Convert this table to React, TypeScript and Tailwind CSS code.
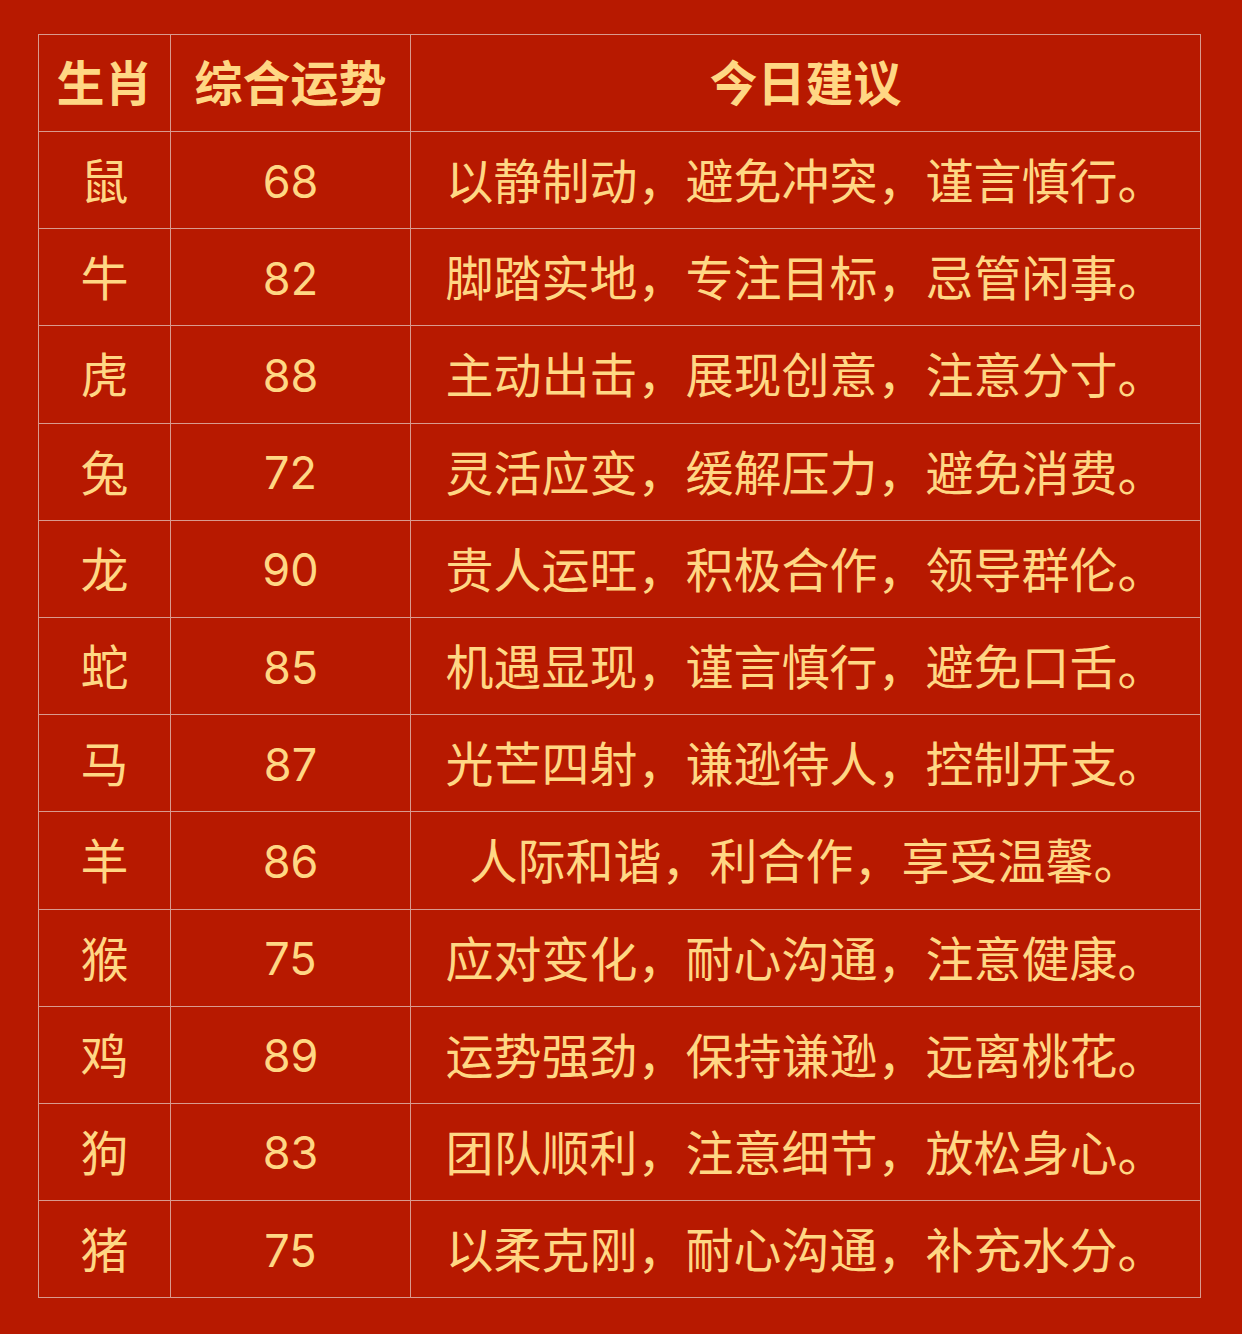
import React from "react";

interface Row {
  animal: string;
  score: number;
  advice: string;
}

const rows: Row[] = [
  { animal: "鼠", score: 68, advice: "以静制动，避免冲突，谨言慎行。" },
  { animal: "牛", score: 82, advice: "脚踏实地，专注目标，忌管闲事。" },
  { animal: "虎", score: 88, advice: "主动出击，展现创意，注意分寸。" },
  { animal: "兔", score: 72, advice: "灵活应变，缓解压力，避免消费。" },
  { animal: "龙", score: 90, advice: "贵人运旺，积极合作，领导群伦。" },
  { animal: "蛇", score: 85, advice: "机遇显现，谨言慎行，避免口舌。" },
  { animal: "马", score: 87, advice: "光芒四射，谦逊待人，控制开支。" },
  { animal: "羊", score: 86, advice: "人际和谐，利合作，享受温馨。" },
  { animal: "猴", score: 75, advice: "应对变化，耐心沟通，注意健康。" },
  { animal: "鸡", score: 89, advice: "运势强劲，保持谦逊，远离桃花。" },
  { animal: "狗", score: 83, advice: "团队顺利，注意细节，放松身心。" },
  { animal: "猪", score: 75, advice: "以柔克刚，耐心沟通，补充水分。" },
];

export default function App() {
  return (
    <div
      className="min-h-[1334px] w-[1242px] bg-[#b71900] pl-[38px] pt-[34px] text-[#ffd784]"
      style={{ fontFamily: '"Noto Sans CJK SC", "Noto Sans", sans-serif' }}
    >
      <table className="w-[1163px] table-fixed border-collapse text-center text-[48px] leading-none">
        <colgroup>
          <col className="w-[132px]" />
          <col className="w-[240px]" />
          <col />
        </colgroup>
        <thead>
          <tr className="h-[97px] font-bold">
            <th className="border border-[#d99a8e] pb-[6px]">生肖</th>
            <th className="border border-[#d99a8e] pb-[6px]">综合运势</th>
            <th className="border border-[#d99a8e] pb-[6px]">今日建议</th>
          </tr>
        </thead>
        <tbody>
          {rows.map((r) => (
            <tr key={r.animal} className="h-[97.2px]">
              <td className="border border-[#d99a8e] pb-[4px]">{r.animal}</td>
              <td className="border border-[#d99a8e] pt-[2px] font-['Inter',sans-serif] text-[45px]">{r.score}</td>
              <td className="border border-[#d99a8e] pb-[4px]">{r.advice}</td>
            </tr>
          ))}
        </tbody>
      </table>
    </div>
  );
}
